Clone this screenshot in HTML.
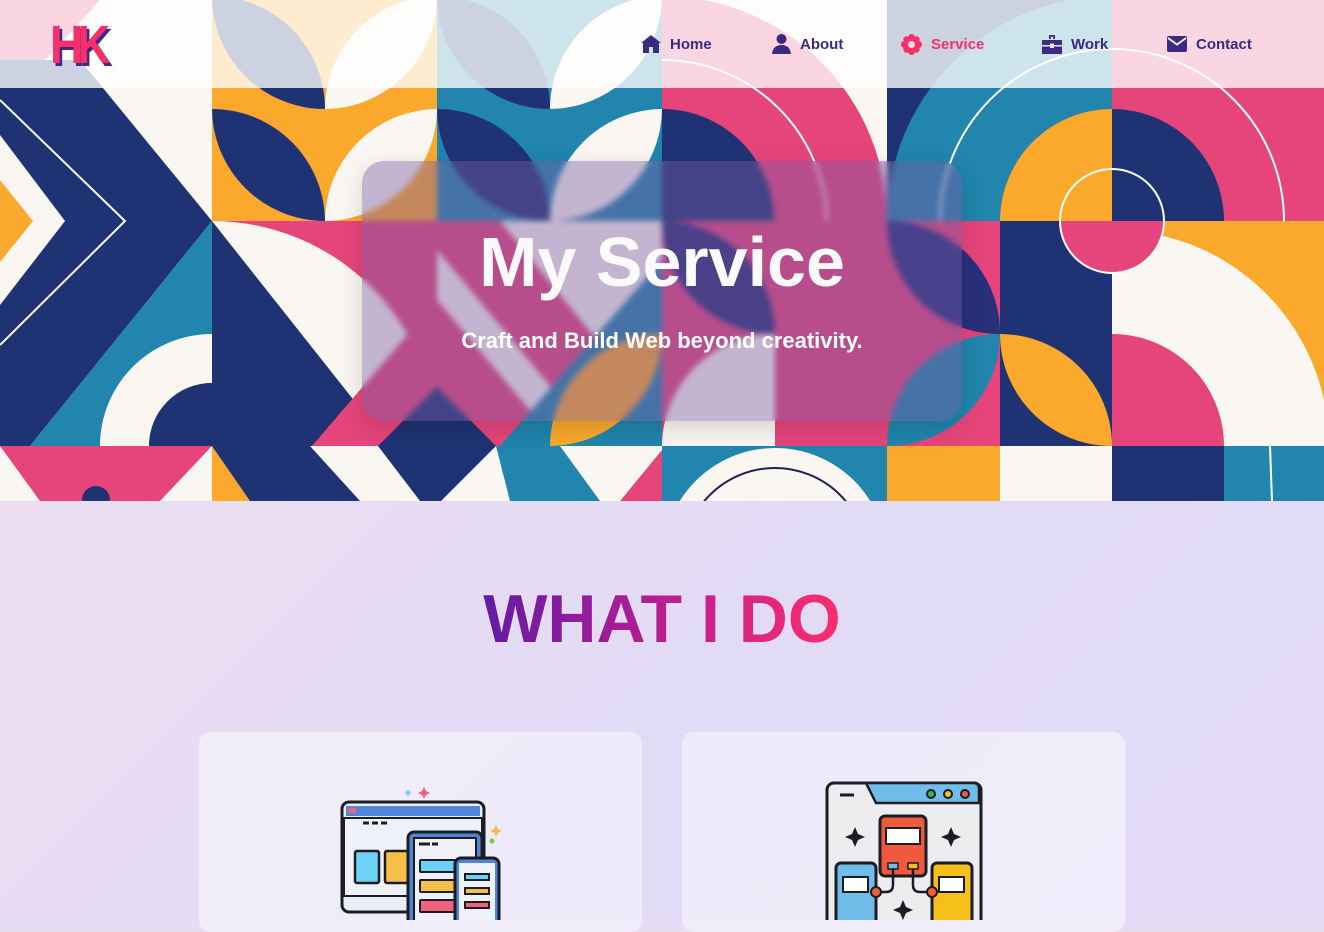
<!DOCTYPE html>
<html><head><meta charset="utf-8"><style>
*{margin:0;padding:0;box-sizing:border-box}
body{width:1324px;height:920px;overflow:hidden;font-family:"Liberation Sans",sans-serif;background:#e6ddf3;position:relative}
#hero{position:absolute;left:0;top:0;width:1324px;height:501px;overflow:hidden}
#hdr{position:absolute;left:0;top:0;width:1324px;height:88px;background:rgba(255,255,255,0.78)}
.logo{position:absolute;left:50px;top:14px;font-size:54px;font-weight:900;color:#f72f6a;letter-spacing:-7px;text-shadow:3px 3px 0 #3b2a8a;font-family:"Liberation Sans",sans-serif;transform:scaleX(0.85);transform-origin:left top}
.nav a{position:absolute;top:34px;font-size:15px;font-weight:bold;color:#3b2a80;text-decoration:none;display:flex;align-items:center;gap:9px;height:20px}
.nav a.act{color:#f72f6a}
.card{position:absolute;left:362px;top:161px;width:600px;height:260px;border-radius:22px;background:rgba(120,90,162,0.42);backdrop-filter:blur(3px);-webkit-backdrop-filter:blur(3px);box-shadow:0 8px 24px rgba(0,0,0,0.15)}
h1{position:absolute;left:0;width:1324px;top:222px;text-align:center;color:#fafafa;font-size:70px;font-weight:bold;letter-spacing:0px}
.sub{position:absolute;left:0;width:1324px;top:328px;text-align:center;color:#fff;font-size:22px;font-weight:bold}
#low{position:absolute;left:0;top:501px;width:1324px;height:419px;background:linear-gradient(135deg,#ecdef0 0%,#e2dbf6 50%,#e4dcf7 100%)}
.what{position:absolute;top:580px;text-align:center;font-size:68px;font-weight:bold;background:linear-gradient(90deg,#5e1aa8 0%,#c21e8e 55%,#ff2f6e 100%);-webkit-background-clip:text;background-clip:text;color:transparent;width:380px;left:472px}
.sc{position:absolute;top:732px;width:443px;height:200px;border-radius:12px;background:rgba(245,242,252,0.7)}
</style></head><body>
<div id="hero">
<svg width="1324" height="501" viewBox="0 0 1324 501" style="position:absolute;left:0;top:0">
<rect width="1324" height="501" fill="#faf7f2"/>
<polygon points="0,0 100,0 0,110" fill="#e5457b"/>
<polygon points="100,0 170,0 100,95" fill="#faf7f2"/>
<polygon points="0,60 80,60 212,221 30,446 0,446" fill="#1f3374"/>
<polygon points="212,221 212,446 30,446" fill="#2185ad"/>
<path d="M100,446 A112,112 0 0 1 212,334 L212,383 A63,63 0 0 0 149,446Z" fill="#faf7f2"/>
<path d="M149,446 A63,63 0 0 1 212,383 L212,446Z" fill="#1f3374"/>
<polygon points="0,135 65,221 0,305" fill="#faf7f2"/>
<polygon points="0,180 33,221 0,262" fill="#fba92d"/>
<polyline points="0,100 125,221 0,345" fill="none" stroke="#faf7f2" stroke-width="2"/>
<rect x="212" y="-4" width="225" height="225" fill="#fba92d"/>
<path d="M212,109 A113,113 0 0 1 325,221 A113,113 0 0 1 212,109Z" fill="#1f3374"/>
<path d="M325,221 A113,113 0 0 1 437,109 A113,113 0 0 1 325,221Z" fill="#faf7f2"/>
<path d="M212,-4 A113,113 0 0 1 325,109 A113,113 0 0 1 212,-4Z" fill="#1f3374"/>
<path d="M325,109 A113,113 0 0 1 437,-4 A113,113 0 0 1 325,109Z" fill="#faf7f2"/>
<rect x="212" y="221" width="225" height="225" fill="#e5457b"/>
<path d="M212,446 L212,221 A225,225 0 0 1 437,446Z" fill="#faf7f2"/>
<polygon points="212,221 390,446 212,446" fill="#1f3374"/>
<rect x="437" y="-4" width="225" height="225" fill="#2185ad"/>
<path d="M437,109 A113,113 0 0 1 550,221 A113,113 0 0 1 437,109Z" fill="#1f3374"/>
<path d="M550,221 A113,113 0 0 1 662,109 A113,113 0 0 1 550,221Z" fill="#faf7f2"/>
<path d="M437,-4 A113,113 0 0 1 550,109 A113,113 0 0 1 437,-4Z" fill="#1f3374"/>
<path d="M550,109 A113,113 0 0 1 662,-4 A113,113 0 0 1 550,109Z" fill="#faf7f2"/>
<rect x="437" y="221" width="225" height="225" fill="#faf7f2"/>
<polygon points="437,221 500,221 662,420 662,446 600,446 437,250" fill="#e5457b"/>
<polygon points="312,446 437,300 560,446" fill="#e5457b"/>
<polygon points="500,446 662,260 662,446" fill="#2185ad"/>
<path d="M550,446 A113,113 0 0 1 662,334 A113,113 0 0 1 550,446Z" fill="#fba92d"/>
<polygon points="378,446 437,387 496,446 437,505" fill="#1f3374"/>
<rect x="662" y="-4" width="225" height="225" fill="#faf7f2"/>
<path d="M662,221 L662,-4 A225,225 0 0 1 887,221Z" fill="#e5457b"/>
<path d="M662,221 L662,109 A112,112 0 0 1 774,221Z" fill="#1f3374"/>
<path d="M662,60 A165,165 0 0 1 827,221" fill="none" stroke="#fff" stroke-width="2"/>
<rect x="662" y="221" width="225" height="225" fill="#e5457b"/>
<path d="M662,221 A113,113 0 0 1 775,334 A113,113 0 0 1 662,221Z" fill="#2a2f78"/>
<path d="M662,446 A113,113 0 0 1 775,334 L775,446Z" fill="#faf7f2"/>
<rect x="887" y="-4" width="225" height="225" fill="#1f3374"/>
<path d="M887,221 A225,225 0 0 1 1112,-4 L1112,109 A112,112 0 0 0 1000,221Z" fill="#2185ad"/>
<path d="M1000,221 A112,112 0 0 1 1112,109 L1112,221Z" fill="#fba92d"/>
<path d="M940,221 A172,172 0 0 1 1112,49" fill="none" stroke="#fff" stroke-width="2"/>
<rect x="887" y="221" width="113" height="225" fill="#e5457b"/>
<path d="M887,221 A112,112 0 0 1 1000,334 A112,112 0 0 1 887,221Z" fill="#28307a"/>
<path d="M887,446 A112,112 0 0 1 1000,334 A112,112 0 0 1 887,446Z" fill="#2185ad"/>
<rect x="1000" y="221" width="112" height="225" fill="#1f3374"/>
<path d="M1000,334 A112,112 0 0 1 1112,446 A112,112 0 0 1 1000,334Z" fill="#fba92d"/>
<rect x="1112" y="-4" width="212" height="225" fill="#e5457b"/>
<path d="M1112,221 L1112,109 A112,112 0 0 1 1224,221Z" fill="#1f3374"/>
<path d="M1112,49 A172,172 0 0 1 1284,221" fill="none" stroke="#fff" stroke-width="2"/>
<path d="M1060,221 A52,52 0 0 1 1112,169 L1112,221Z" fill="#fba92d"/>
<path d="M1112,169 A52,52 0 0 1 1164,221 L1112,221Z" fill="#1f3374"/>
<rect x="1112" y="221" width="212" height="225" fill="#fba92d"/>
<path d="M1112,446 L1112,230 A216,216 0 0 1 1324,400 L1324,446Z" fill="#faf7f2"/>
<path d="M1112,446 L1112,334 A112,112 0 0 1 1224,446Z" fill="#e5457b"/>
<path d="M1060,221 A52,52 0 0 0 1164,221Z" fill="#e5457b"/>
<circle cx="1112" cy="221" r="52" fill="none" stroke="#fff" stroke-width="2"/>
<rect x="0" y="446" width="212" height="55" fill="#faf7f2"/>
<polygon points="0,446 212,446 160,501 40,501" fill="#e5457b"/>
<circle cx="96" cy="500" r="14" fill="#1f3374"/>
<rect x="212" y="446" width="225" height="55" fill="#1f3374"/>
<polygon points="212,446 250,501 212,501" fill="#fba92d"/>
<polygon points="310,446 378,446 420,501 360,501" fill="#faf7f2"/>
<rect x="437" y="446" width="225" height="55" fill="#faf7f2"/>
<polygon points="378,446 496,446 437,505" fill="#1f3374"/>
<polygon points="496,446 560,446 600,501 510,501" fill="#2185ad"/>
<polygon points="620,501 662,450 662,501" fill="#e5457b"/>
<rect x="662" y="446" width="225" height="55" fill="#2185ad"/>
<circle cx="775" cy="560" r="112" fill="#faf7f2"/>
<circle cx="775" cy="560" r="92" fill="none" stroke="#1f2050" stroke-width="2"/>
<rect x="887" y="446" width="113" height="55" fill="#fba92d"/>
<rect x="1000" y="446" width="112" height="55" fill="#faf7f2"/>
<rect x="1112" y="446" width="212" height="55" fill="#2185ad"/>
<rect x="1112" y="446" width="112" height="55" fill="#1f3374"/>
<path d="M1270,446 L1272,501" stroke="#fff" stroke-width="2"/>
</svg>
<div id="hdr"></div>
<div class="logo">HK</div>
<div class="nav">
<a style="left:641px"><svg width="20" height="18" viewBox="0 0 20 18"><path d="M10 0 L20 8 L18 8 L18 18 L12 18 L12 12 L8 12 L8 18 L2 18 L2 8 L0 8Z" fill="#3b2a80"/></svg>Home</a>
<a style="left:772px"><svg width="19" height="20" viewBox="0 0 19 20"><circle cx="9.5" cy="5" r="5" fill="#3b2a80"/><path d="M0 20 Q1 11 9.5 11 Q18 11 19 20Z" fill="#3b2a80"/></svg>About</a>
<a class="act" style="left:901px"><svg width="21" height="21" viewBox="0 0 21 21"><g fill="#f72f6a"><circle cx="10.5" cy="10.5" r="7"/><circle cx="10.5" cy="3.5" r="3.5"/><circle cx="10.5" cy="17.5" r="3.5"/><circle cx="3.5" cy="10.5" r="3.5"/><circle cx="17.5" cy="10.5" r="3.5"/><circle cx="5.5" cy="5.5" r="3.2"/><circle cx="15.5" cy="5.5" r="3.2"/><circle cx="5.5" cy="15.5" r="3.2"/><circle cx="15.5" cy="15.5" r="3.2"/></g><circle cx="10.5" cy="10.5" r="3.5" fill="#fde"/></svg>Service</a>
<a style="left:1042px"><svg width="20" height="19" viewBox="0 0 20 19"><path d="M7 0 h6 v4 h-1.8 v-2.2 h-2.4 v2.2 h-1.8Z M0 5 h20 v14 h-20Z" fill="#3b2a80"/><rect x="0" y="10" width="20" height="1.5" fill="#e8e0f0"/><rect x="8" y="8.5" width="4" height="4.5" fill="#e8e0f0"/></svg>Work</a>
<a style="left:1167px"><svg width="20" height="16" viewBox="0 0 20 16"><rect x="0" y="0" width="20" height="16" rx="2" fill="#3b2a80"/><path d="M1 2 L10 8.5 L19 2" stroke="#f4e6f0" stroke-width="2" fill="none"/></svg>Contact</a>
</div>
<div class="card"></div>
<h1>My Service</h1>
<div class="sub">Craft and Build Web beyond creativity.</div>
</div>
<div id="low"></div>
<div class="what">WHAT I DO</div>
<div class="sc" style="left:199px"></div>
<div class="sc" style="left:682px"></div>
<svg style="position:absolute;left:338px;top:785px" width="166" height="135" viewBox="0 0 166 135">
<circle cx="70" cy="8" r="2.5" fill="#6dd3f5"/><path d="M86 2 l2 4 4 2 -4 2 -2 4 -2 -4 -4 -2 4 -2z" fill="#f0627a"/>
<path d="M158 40 l2 4 4 2 -4 2 -2 4 -2 -4 -4 -2 4 -2z" fill="#f5c04a"/><circle cx="154" cy="56" r="2.5" fill="#7ac943"/>
<rect x="4" y="17" width="142" height="110" rx="7" fill="#e9edf6" stroke="#1c1c24" stroke-width="3"/>
<rect x="8" y="21" width="134" height="10" fill="#4f86d9"/><rect x="10" y="23" width="8" height="5" fill="#f0627a"/>
<rect x="6" y="33" width="138" height="78" fill="#eef1f8" stroke="#1c1c24" stroke-width="2"/>
<path d="M25 38h6M34 38h6M43 38h6" stroke="#1c1c24" stroke-width="3"/>
<rect x="17" y="66" width="24" height="32" rx="2" fill="#6dd3f5" stroke="#1c1c24" stroke-width="2.5"/>
<rect x="47" y="66" width="24" height="32" rx="2" fill="#f5c04a" stroke="#1c1c24" stroke-width="2.5"/>
<rect x="70" y="47" width="74" height="95" rx="6" fill="#4f86d9" stroke="#1c1c24" stroke-width="3"/>
<rect x="76" y="53" width="62" height="85" fill="#eef1f8" stroke="#1c1c24" stroke-width="2"/>
<path d="M81 59h5M86 59h6M94 59h6" stroke="#1c1c24" stroke-width="3"/>
<rect x="82" y="75" width="36" height="12" rx="1" fill="#6dd3f5" stroke="#1c1c24" stroke-width="2"/>
<rect x="82" y="95" width="36" height="12" rx="1" fill="#f5c04a" stroke="#1c1c24" stroke-width="2"/>
<rect x="82" y="115" width="36" height="12" rx="1" fill="#f0627a" stroke="#1c1c24" stroke-width="2"/>
<rect x="117" y="73" width="44" height="70" rx="6" fill="#4f86d9" stroke="#1c1c24" stroke-width="3"/>
<rect x="121" y="78" width="36" height="60" fill="#eef1f8"/>
<rect x="127" y="89" width="24" height="6" fill="#6dd3f5" stroke="#1c1c24" stroke-width="2"/>
<rect x="127" y="103" width="24" height="6" fill="#f5c04a" stroke="#1c1c24" stroke-width="2"/>
<rect x="127" y="117" width="24" height="6" fill="#f0627a" stroke="#1c1c24" stroke-width="2"/>
</svg>
<svg style="position:absolute;left:824px;top:780px" width="160" height="140" viewBox="0 0 160 140">
<rect x="3" y="3" width="154" height="150" rx="7" fill="#ededf0" stroke="#1c1c24" stroke-width="3"/>
<path d="M42 3 H150 a5 5 0 0 1 5 5 V23 H52 Z" fill="#6fbde8" stroke="#1c1c24" stroke-width="2.5"/>
<path d="M16 15h14" stroke="#1c1c24" stroke-width="3"/>
<circle cx="107" cy="14" r="4" fill="#3bb54a" stroke="#1c1c24" stroke-width="2"/><circle cx="124" cy="14" r="4" fill="#f5c01a" stroke="#1c1c24" stroke-width="2"/><circle cx="141" cy="14" r="4" fill="#f05a3c" stroke="#1c1c24" stroke-width="2"/>
<rect x="56" y="36" width="46" height="60" rx="5" fill="#f05a3c" stroke="#1c1c24" stroke-width="3"/>
<rect x="62" y="48" width="34" height="16" fill="#fff" stroke="#1c1c24" stroke-width="2"/>
<rect x="64" y="83" width="10" height="6" fill="#6fbde8" stroke="#1c1c24" stroke-width="1.5"/><rect x="84" y="83" width="10" height="6" fill="#f5c01a" stroke="#1c1c24" stroke-width="1.5"/>
<rect x="12" y="83" width="40" height="65" rx="5" fill="#6fbde8" stroke="#1c1c24" stroke-width="3"/>
<rect x="19" y="97" width="25" height="15" fill="#fff" stroke="#1c1c24" stroke-width="2"/>
<rect x="108" y="83" width="40" height="65" rx="5" fill="#f5c01a" stroke="#1c1c24" stroke-width="3"/>
<rect x="115" y="97" width="25" height="15" fill="#fff" stroke="#1c1c24" stroke-width="2"/>
<path d="M69 89 V105 Q69 112 62 112 H52 M89 89 V105 Q89 112 96 112 H108" fill="none" stroke="#1c1c24" stroke-width="2.5"/>
<circle cx="52" cy="112" r="5" fill="#f05a3c" stroke="#1c1c24" stroke-width="2"/><circle cx="108" cy="112" r="5" fill="#f05a3c" stroke="#1c1c24" stroke-width="2"/>
<path d="M31 47 l3 7 7 3 -7 3 -3 7 -3 -7 -7 -3 7 -3z M127 47 l3 7 7 3 -7 3 -3 7 -3 -7 -7 -3 7 -3z M79 120 l3 7 7 3 -7 3 -3 7 -3 -7 -7 -3 7 -3z" fill="#1c1c24"/>
</svg>
</body></html>
